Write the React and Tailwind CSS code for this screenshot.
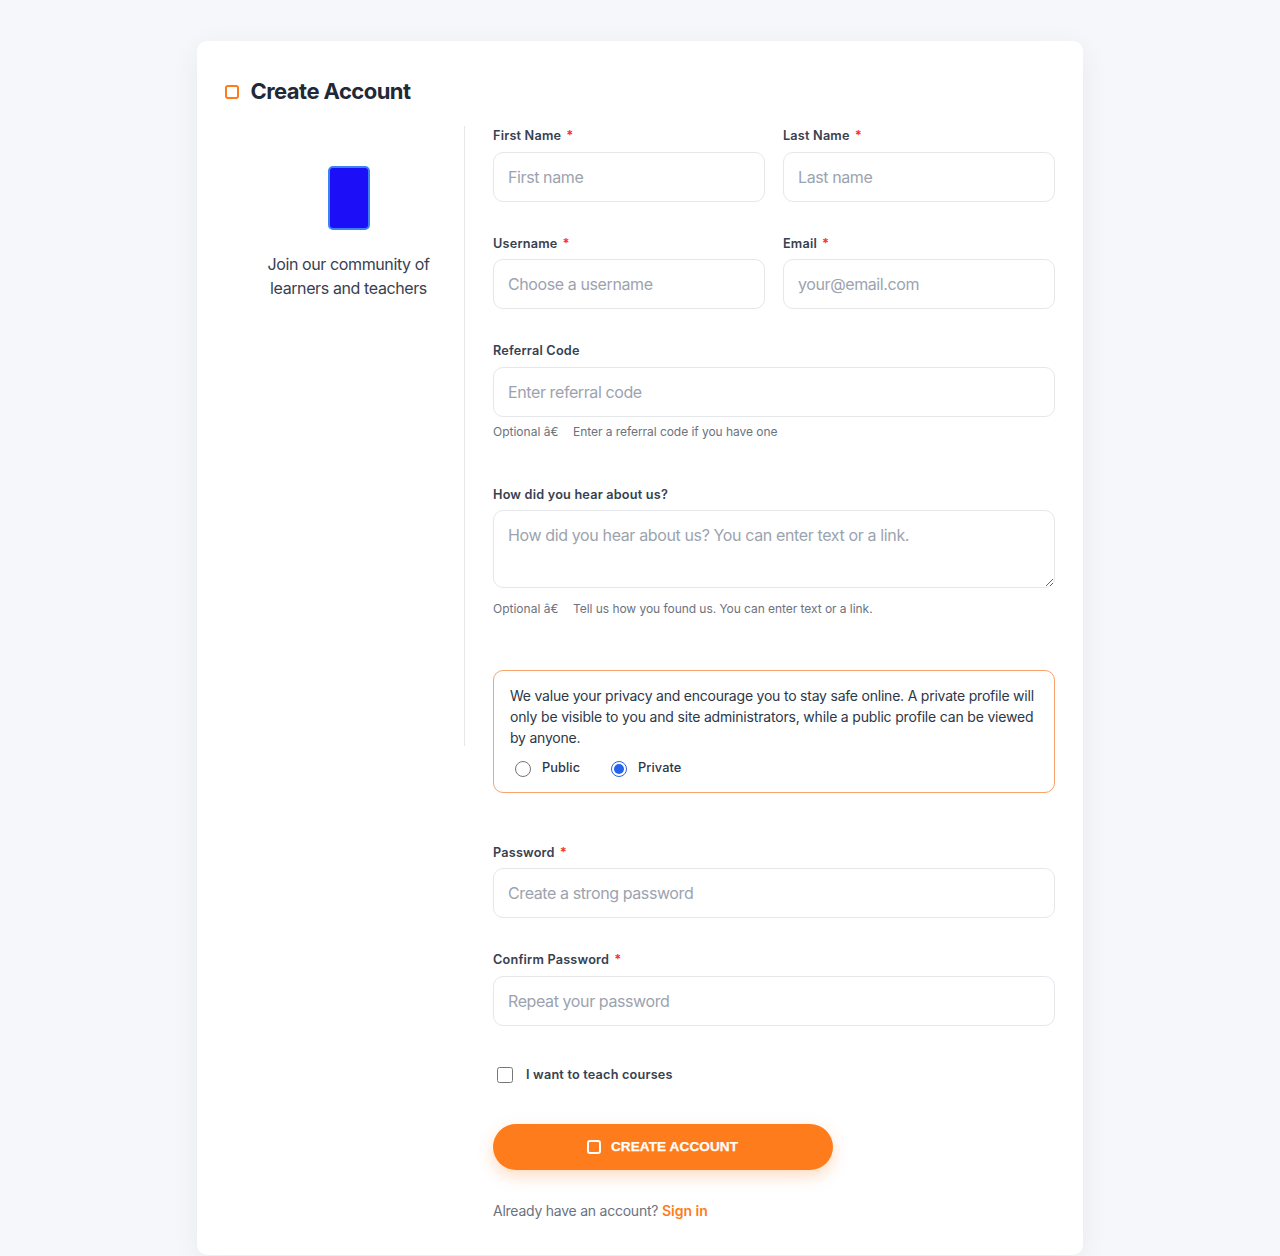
const inputBase =
  'block h-[50px] w-full rounded-[10px] border border-gray-200 bg-white px-3.5 text-base tracking-[-0.4px] text-gray-800 outline-none placeholder:text-[#9ca3af]';

function Label({ children, required, className = '' }) {
  return (
    <label className={`block h-5 text-[12.7px] font-semibold leading-[19px] tracking-[0.19px] text-[#374151] ${className}`}>
      {children}
      {required && <span className="ml-[5px] font-bold text-[#f83434]">*</span>}
    </label>
  );
}

function Field({ label, placeholder, required, type = 'text', gap = 'mt-1.5' }) {
  return (
    <div className="flex-1">
      <Label required={required}>{label}</Label>
      <input type={type} placeholder={placeholder} className={`${inputBase} ${gap}`} />
    </div>
  );
}

function Hint({ children, className }) {
  return (
    <p className={`flex text-[12px] leading-[18px] text-[#6b7280] ${className}`}>
      <span className="w-20">Optional â€</span>
      <span className="tracking-[-0.05px]">{children}</span>
    </p>
  );
}

function Radio({ checked }) {
  return (
    <svg width="16" height="16" viewBox="0 0 16 16" fill="none" className="mt-px shrink-0">
      <circle cx="8" cy="8" r="7.5" fill="#fff" stroke={checked ? '#2563eb' : '#767676'} />
      {checked && <circle cx="8" cy="8" r="5" fill="#2563eb" />}
    </svg>
  );
}

export default function App() {
  return (
    <div className="flex h-[1256px] justify-center overflow-hidden bg-[#f5f7fb] pt-[41px] font-[Inter,sans-serif]">
      <main className="h-[1214px] w-[886px] rounded-[10px] bg-white px-7 pt-[35px] shadow-[0_6px_30px_rgba(15,23,42,0.06)]">
        <header className="flex h-[30px] items-center gap-[11.5px]">
          <span className="mt-px size-3.5 rounded-[3px] border-2 border-[#ff7c1c]" />
          <h1 className="text-[22px] font-bold leading-[30px] tracking-[-0.55px] text-[#1f2937]">Create Account</h1>
        </header>

        <div className="mt-5 flex items-start">
          <aside className="flex h-[620px] w-60 shrink-0 flex-col items-center border-r border-gray-200 pl-2 pt-10">
            <div className="h-16 w-[42px] rounded-[5px] border-2 border-[#3b82f6] bg-[#1c0ff7]" />
            <p className="mt-[22px] text-center text-base leading-6 tracking-[-0.39px] text-[#374151]">
              Join our community of
              <br />
              learners and teachers
            </p>
          </aside>

          <form className="ml-7 w-[562px]">
            <div className="flex gap-[18px]">
              <Field label="First Name" placeholder="First name" required />
              <Field label="Last Name" placeholder="Last name" required />
            </div>
            <div className="mt-8 flex gap-[18px]">
              <Field label="Username" placeholder="Choose a username" required gap="mt-[5px]" />
              <Field label="Email" placeholder="your@email.com" required gap="mt-[5px]" />
            </div>
            <div className="mt-8">
              <Field label="Referral Code" placeholder="Enter referral code" />
              <Hint className="mt-1.5">Enter a referral code if you have one</Hint>
            </div>
            <div className="mt-11">
              <Label>How did you hear about us?</Label>
              <textarea
                placeholder="How did you hear about us? You can enter text or a link."
                className="mt-[5px] block h-[78px] w-full resize-y rounded-[10px] border border-gray-200 bg-white px-3.5 py-3 text-base leading-6 tracking-[-0.37px] outline-none placeholder:text-[#9ca3af]"
              />
              <Hint className="mt-3">Tell us how you found us. You can enter text or a link.</Hint>
            </div>

            <div className="mt-[52px] h-[123px] rounded-[10px] border border-[#f7a36b] px-4 pt-3.5 text-[#2d3748]">
              <p className="whitespace-nowrap text-[14px] leading-[21px] tracking-[-0.215px]">
                We value your privacy and encourage you to stay safe online. A private profile will
                <br />
                <span className="tracking-[-0.18px]">
                  only be visible to you and site administrators, while a public profile can be viewed
                </span>
                <br />
                by anyone.
              </p>
              <div className="mt-2.5 flex h-5 items-center pl-[5px] text-[12.8px] font-medium leading-5 tracking-[0.08px]">
                <span className="flex w-24 items-center gap-[11px]">
                  <Radio />
                  <span>Public</span>
                </span>
                <span className="flex items-center gap-[11px]">
                  <Radio checked />
                  <span>Private</span>
                </span>
              </div>
            </div>

            <div className="mt-[50px]">
              <Field label="Password" placeholder="Create a strong password" type="password" required gap="mt-[5px]" />
            </div>
            <div className="mt-8">
              <Field label="Confirm Password" placeholder="Repeat your password" type="password" required />
            </div>

            <div className="mt-[39px] flex h-5 items-center pl-1">
              <span className="size-4 rounded-[2.5px] border border-[#767676]" />
              <Label className="ml-[13px]">I want to teach courses</Label>
            </div>

            <button
              type="button"
              className="mt-[39px] flex h-[46px] w-[340px] items-center justify-center gap-2.5 rounded-full bg-[#ff7c1c] pr-px text-white shadow-[0_6px_16px_rgba(255,124,28,0.28)]"
            >
              <span className="size-3.5 rounded-[3px] border-2 border-white" />
              <span className="font-['Liberation_Sans',sans-serif] text-[13.6px] font-bold leading-5 tracking-[0.08px] [-webkit-text-stroke:0.25px_white]">
                CREATE ACCOUNT
              </span>
            </button>

            <p className="mt-[31px] text-[14px] leading-5 tracking-[-0.24px] text-[#6b7280]">
              Already have an account?{' '}
              <a className="font-semibold tracking-[0.02px] text-[#ff7c1c]">Sign in</a>
            </p>
          </form>
        </div>
      </main>
    </div>
  );
}
